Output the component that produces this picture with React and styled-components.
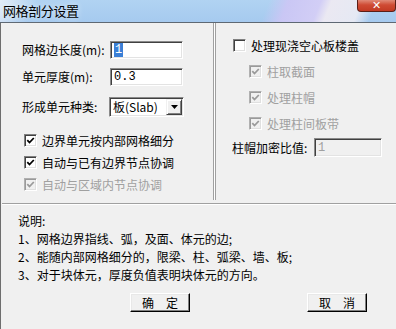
import React from 'react';
import styled, { createGlobalStyle } from 'styled-components';

const GlobalStyle = createGlobalStyle`
  html, body {
    margin: 0;
    padding: 0;
    background: #f0f0f0;
  }
  body {
    font-family: "Noto Sans CJK SC", "Liberation Sans", sans-serif;
    font-size: 12px;
    color: #000;
  }
`

const Window = styled.div`
  width: 396px;
  height: 329px;
  overflow: hidden;
  display: flex;
  flex-direction: column;
  background: #f0f0f0;
`

const TitleBar = styled.div`
  flex: none;
  height: 22px;
  display: flex;
  justify-content: space-between;
  align-items: flex-start;
  border-bottom: 1px solid #5e6873;
  background:
    linear-gradient(115deg, rgba(235, 240, 248, 0.85) 0px, rgba(235, 240, 248, 0) 34px),
    linear-gradient(112deg, rgba(205, 198, 245, 0) 250px, rgba(205, 198, 245, 0.9) 268px, rgba(214, 206, 246, 0.9) 298px, rgba(238, 234, 242, 0.95) 308px, rgba(236, 236, 244, 0.9) 336px, rgba(200, 228, 248, 0) 350px),
    linear-gradient(180deg, #b1d3f2 0%, #a6caef 100%);
`

const Title = styled.div`
  padding: 2px 0 0 3px;
  line-height: 17px;
  font-size: 13px;
  letter-spacing: -0.4px;
  text-shadow: 0 0 6px rgba(255, 255, 255, 0.8);
`

const CloseButton = styled.div`
  width: 39px;
  height: 12px;
  box-sizing: border-box;
  display: flex;
  align-items: center;
  justify-content: center;
  border: 1px solid #5b1f18;
  border-top: none;
  border-radius: 0 0 4px 4px;
  background: linear-gradient(180deg, #e08a78 0%, #cf4b34 45%, #c23a24 100%);
  color: #fff;
  font-family: "DejaVu Sans", sans-serif;
  font-weight: bold;
  font-size: 11px;
  line-height: 11px;
`

const Client = styled.div`
  flex: 1;
  display: flex;
  flex-direction: column;
  border-left: 1px solid #6e6e6e;
  padding-left: 1px;
`

const Top = styled.div`
  height: 177px;
  display: flex;
`

const LeftPanel = styled.div`
  width: 212px;
  box-sizing: border-box;
  border-right: 1px solid #a0a0a0;
  padding: 18px 0 0 20px;
`

const RightPanel = styled.div`
  flex: 1;
  border-left: 1px solid #fff;
  box-shadow: inset 1px 0 0 #a0a0a0;
  padding: 9px 0 0 17px;
`

const FieldRow = styled.div`
  display: grid;
  grid-template-columns: ${p => p.$label}px auto;
  align-items: center;
  margin-top: ${p => p.$top || 0}px;
`

const Label = styled.span`
  line-height: 16px;
  white-space: nowrap;
`

const Sunken = styled.div`
  box-sizing: border-box;
  width: ${p => p.$w}px;
  height: ${p => p.$h}px;
  border: 1px solid;
  border-color: #8a8a8a #fff #fff #8a8a8a;
  box-shadow: inset 1px 1px 0 #404040, inset -1px -1px 0 #e3e3e3;
  background: ${p => (p.$disabled ? '#f0f0f0' : '#fff')};
  color: ${p => (p.$disabled ? '#a0a0a0' : '#000')};
  display: flex;
  align-items: center;
  padding: 0 2px 0 3px;
  line-height: 14px;
  font-family: "Liberation Mono", "Noto Sans CJK SC", monospace;
`

const Selected = styled.span`
  background: #3a7fd6;
  color: #fff;
  padding: 0 1px;
`

const SelectText = styled.span`
  flex: 1;
  font-family: "Noto Sans CJK SC", "Liberation Sans", sans-serif;
`

const ArrowButton = styled.div`
  width: 16px;
  height: 16px;
  box-sizing: border-box;
  border: 1px solid;
  border-color: #f0f0f0 #404040 #404040 #f0f0f0;
  box-shadow: inset 1px 1px 0 #fff, inset -1px -1px 0 #808080;
  background: #f0f0f0;
  display: flex;
  align-items: center;
  justify-content: center;
  margin-right: -1px;
`

const CheckRow = styled.label`
  display: flex;
  align-items: center;
  height: ${p => p.$h}px;
  margin-left: ${p => p.$indent || 0}px;
  margin-top: ${p => p.$top || 0}px;
  color: ${p => (p.$disabled ? '#a0a0a0' : '#000')};
  white-space: nowrap;
`

const Box = styled.span`
  width: 13px;
  height: 13px;
  box-sizing: border-box;
  flex: none;
  border: 1px solid;
  border-color: ${p => (p.$disabled ? '#b0b0b0 #fff #fff #b0b0b0' : '#808080 #fff #fff #808080')};
  box-shadow: ${p => (p.$disabled ? 'inset 1px 1px 0 #9a9a9a, inset -1px -1px 0 #e0e0e0' : 'inset 1px 1px 0 #404040, inset -1px -1px 0 #e0e0e0')};
  background: ${p => (p.$disabled ? '#f0f0f0' : '#fff')};
  display: flex;
  align-items: center;
  justify-content: center;
  margin-right: ${p => p.$gap || 5}px;
`

const Separator = styled.div`
  margin-top: 3px;
  border-top: 1px solid #a0a0a0;
  border-bottom: 1px solid #fff;
`

const Notes = styled.div`
  padding: 7px 0 0 16px;
  line-height: 18px;
  white-space: nowrap;
`

const ButtonRow = styled.div`
  display: flex;
  gap: 117px;
  padding-left: 128px;
  margin-top: 9px;
`

const Button = styled.div`
  width: 60px;
  height: 19px;
  box-sizing: border-box;
  border: 1px solid;
  border-color: #fff #000 #000 #fff;
  box-shadow: inset -1px -1px 0 #808080, inset 1px 1px 0 #e8e8e8;
  background: #f0f0f0;
  display: flex;
  align-items: center;
  justify-content: center;
  line-height: 14px;
`

function Checkbox({ checked, disabled, children, ...rest }) {
  const stroke = disabled ? '#9a9a9a' : '#000';
  return (
    <CheckRow $disabled={disabled} {...rest}>
      <Box $disabled={disabled}>
        {checked && (
          <svg width="9" height="9" viewBox="0 0 9 9">
            <path d="M1.3 4.2 L3.5 6.5 L7.8 2" fill="none" stroke={stroke} strokeWidth="1.8" />
          </svg>
        )}
      </Box>
      {children}
    </CheckRow>
  );
}

export default function App() {
  return (
    <>
      <GlobalStyle />
      <Window>
        <TitleBar>
          <Title>网格剖分设置</Title>
          <CloseButton>✕</CloseButton>
        </TitleBar>
        <Client>
          <Top>
            <LeftPanel>
              <FieldRow $label={88}>
                <Label>网格边长度(m):</Label>
                <Sunken $w={73} $h={18}><Selected>1</Selected></Sunken>
              </FieldRow>
              <FieldRow $label={88} $top={9}>
                <Label>单元厚度(m):</Label>
                <Sunken $w={73} $h={18}>0.3</Sunken>
              </FieldRow>
              <FieldRow $label={87} $top={11}>
                <Label>形成单元种类:</Label>
                <Sunken $w={75} $h={20}>
                  <SelectText>板(Slab)</SelectText>
                  <ArrowButton>
                    <svg width="7" height="4" viewBox="0 0 7 4">
                      <path d="M0 0 H7 L3.5 4 Z" fill="#000" />
                    </svg>
                  </ArrowButton>
                </Sunken>
              </FieldRow>
              <Checkbox checked $h={22} $top={12} $indent={2}>边界单元按内部网格细分</Checkbox>
              <Checkbox checked $h={22} $indent={2}>自动与已有边界节点协调</Checkbox>
              <Checkbox checked disabled $h={22} $indent={2}>自动与区域内节点协调</Checkbox>
            </LeftPanel>
            <RightPanel>
              <Checkbox $h={26} $indent={1}>处理现浇空心板楼盖</Checkbox>
              <Checkbox checked disabled $h={26} $indent={17}>柱取截面</Checkbox>
              <Checkbox checked disabled $h={26} $indent={17}>处理柱帽</Checkbox>
              <Checkbox checked disabled $h={26} $indent={17}>处理柱间板带</Checkbox>
              <FieldRow $label={82} $top={2}>
                <Label>柱帽加密比值:</Label>
                <Sunken $w={68} $h={19} $disabled>1</Sunken>
              </FieldRow>
            </RightPanel>
          </Top>
          <Separator />
          <Notes>
            <div>说明:</div>
            <div>1、网格边界指线、弧，及面、体元的边;</div>
            <div>2、能随内部网格细分的，限梁、柱、弧梁、墙、板;</div>
            <div>3、对于块体元，厚度负值表明块体元的方向。</div>
          </Notes>
          <ButtonRow>
            <Button>确　定</Button>
            <Button>取　消</Button>
          </ButtonRow>
        </Client>
      </Window>
    </>
  );
}
